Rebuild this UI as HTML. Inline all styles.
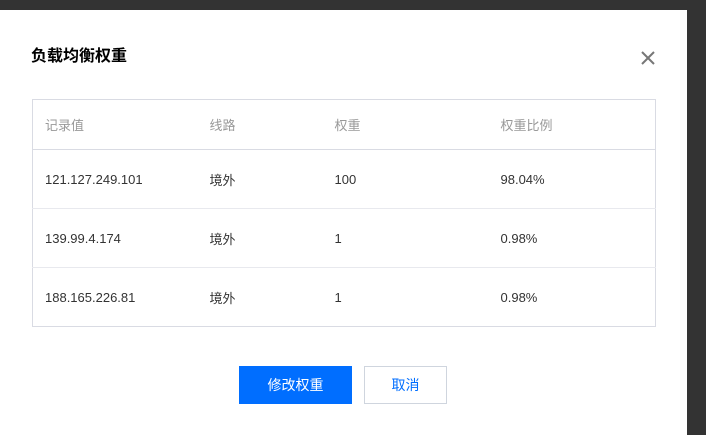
<!DOCTYPE html>
<html><head><meta charset="utf-8"><style>
*{margin:0;padding:0;box-sizing:border-box}
body{width:706px;height:435px;background:#333;position:relative;overflow:hidden;font-family:"Liberation Sans","Noto Sans CJK SC",sans-serif}
.modal{position:absolute;left:0;top:10px;width:687px;height:425px;background:#fff}
.t{position:absolute;left:31px;top:32px;font-size:16px;font-weight:bold;color:#000}
.x{position:absolute;left:640px;top:40px}
table{position:absolute;left:32px;top:89px;width:624px;border:1px solid #d9dbe3;border-collapse:collapse;font-size:13px;color:#333}
td{padding-left:12px;height:59px;border-top:1px solid #e8e9ee}
tr.h td{height:50px;color:#999;border-top:none;border-bottom:1px solid #d9dbe3}
.b1{position:absolute;left:239px;top:356px;width:113px;height:38px;background:#006eff;color:#fff;font-size:14px;text-align:center;line-height:38px}
.b2{position:absolute;left:364px;top:356px;width:83px;height:38px;border:1px solid #cfd5de;color:#006eff;font-size:14px;text-align:center;line-height:36px}
</style></head><body>
<div class="modal">
<div class="t">负载均衡权重</div>
<svg class="x" width="16" height="16" viewBox="0 0 16 16"><path d="M2 2L14 14M14 2L2 14" stroke="#777" stroke-width="2"/></svg>
<table>
<tr class="h"><td style="width:165px">记录值</td><td style="width:125px">线路</td><td style="width:166px">权重</td><td>权重比例</td></tr>
<tr><td>121.127.249.101</td><td>境外</td><td>100</td><td>98.04%</td></tr>
<tr><td>139.99.4.174</td><td>境外</td><td>1</td><td>0.98%</td></tr>
<tr><td>188.165.226.81</td><td>境外</td><td>1</td><td>0.98%</td></tr>
</table>
<div class="b1">修改权重</div>
<div class="b2">取消</div>
</div>
</body></html>
